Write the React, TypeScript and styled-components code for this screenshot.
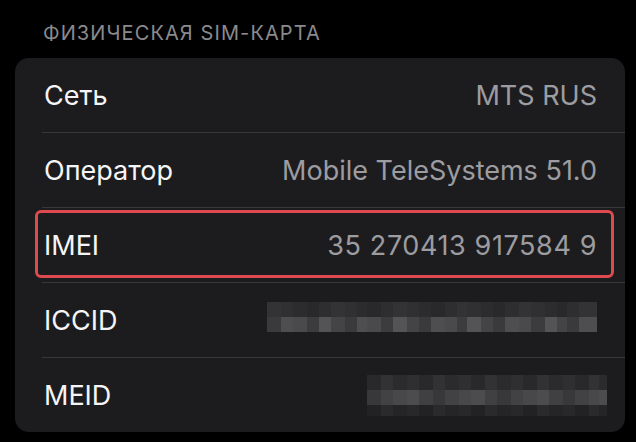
import React from "react";
import styled, { createGlobalStyle } from "styled-components";

const Global = createGlobalStyle`
  html, body { margin: 0; padding: 0; background: #000; }
  body { font-family: Inter, "Noto Sans", sans-serif; -webkit-font-smoothing: antialiased; }
`;

const Page = styled.div`
  width: 636px;
  height: 442px;
  background: #000;
  padding-top: 20px;
  box-sizing: border-box;
  overflow: hidden;
`;

const Heading = styled.div`
  margin-left: 43px;
  font-size: 20px;
  line-height: 26px;
  letter-spacing: 1.1px;
  color: #8a8a8e;
  text-transform: uppercase;
  margin-bottom: 12px;
`;

const Card = styled.div`
  margin-left: 15px;
  width: 610px;
  background: #1c1c1e;
  border-radius: 14px;
  overflow: hidden;
`;

const Row = styled.div`
  position: relative;
  display: flex;
  align-items: center;
  justify-content: space-between;
  height: 74px;
  padding: 0 28px 0 29px;
`;

const Separator = styled.div`
  height: 1px;
  margin-left: 27px;
  background: #38383a;
`;

const Label = styled.span`
  font-size: 27px;
  color: #f5f5f7;
`;

const Value = styled.span<{ $spread?: boolean }>`
  font-size: 27px;
  color: #9c9ca1;
  letter-spacing: ${(p) => (p.$spread ? "0.6px" : "0")};
`;

const Highlight = styled.div`
  position: absolute;
  left: 20px;
  right: 11px;
  top: 2px;
  bottom: 4px;
  border: 3px solid #dd4a4f;
  border-radius: 6px;
  pointer-events: none;
`;

function Mosaic({ width, rows, cols, seed }: { width: number; rows: { h: number; tones: string[] }[]; cols: number[]; seed: number }) {
  let y = 0;
  const rects: React.ReactNode[] = [];
  rows.forEach((r, ri) => {
    let x = 0;
    cols.forEach((w, ci) => {
      const tone = r.tones[(ci * 7 + ri * 3 + seed) % r.tones.length];
      rects.push(<rect key={`${ri}-${ci}`} x={x} y={y} width={w} height={r.h} fill={tone} />);
      x += w;
    });
    y += r.h;
  });
  return (
    <svg width={width} height={y} viewBox={`0 0 ${width} ${y}`} style={{ display: "block" }}>
      {rects}
    </svg>
  );
}

const MosaicWrap = styled.div<{ $shift: number; $lift: number }>`
  margin-right: ${(p) => p.$shift}px;
  margin-top: ${(p) => -p.$lift}px;
`;

export default function App() {
  const iccidCols = [14, 12, 14, 12, 12, 14, 12, 10, 14, 12, 14, 12, 12, 14, 12, 10, 14, 12, 12, 14, 12, 14, 12, 10, 12, 18];
  const meidCols = [14, 12, 14, 12, 14, 12, 14, 12, 14, 12, 14, 12, 14, 12, 14, 12, 14, 10, 14];
  return (
    <>
      <Global />
      <Page>
        <Heading>Физическая SIM-карта</Heading>
        <Card>
          <Row>
            <Label>Сеть</Label>
            <Value>MTS RUS</Value>
          </Row>
          <Separator />
          <Row>
            <Label>Оператор</Label>
            <Value>Mobile TeleSystems 51.0</Value>
          </Row>
          <Separator />
          <Row>
            <Label>IMEI</Label>
            <Value $spread>35 270413 917584 9</Value>
            <Highlight />
          </Row>
          <Separator />
          <Row>
            <Label>ICCID</Label>
            <MosaicWrap $shift={0} $lift={6}>
              <Mosaic
                width={330}
                seed={1}
                cols={iccidCols}
                rows={[
                  { h: 15, tones: ["#2c2c2e", "#333335", "#29292b", "#303032", "#2e2e30"] },
                  { h: 15, tones: ["#4a4a4c", "#3c3c3e", "#545456", "#444446", "#3a3a3c", "#4e4e50"] },
                ]}
              />
            </MosaicWrap>
          </Row>
          <Separator />
          <Row>
            <Label>MEID</Label>
            <MosaicWrap $shift={-10} $lift={0}>
              <Mosaic
                width={240}
                seed={4}
                cols={meidCols}
                rows={[
                  { h: 15, tones: ["#29292b", "#2f2f31", "#2b2b2d", "#323234"] },
                  { h: 15, tones: ["#404042", "#48484a", "#38383a", "#4c4c4e", "#424244"] },
                  { h: 11, tones: ["#252527", "#2a2a2c", "#222224", "#28282a"] },
                ]}
              />
            </MosaicWrap>
          </Row>
        </Card>
      </Page>
    </>
  );
}
